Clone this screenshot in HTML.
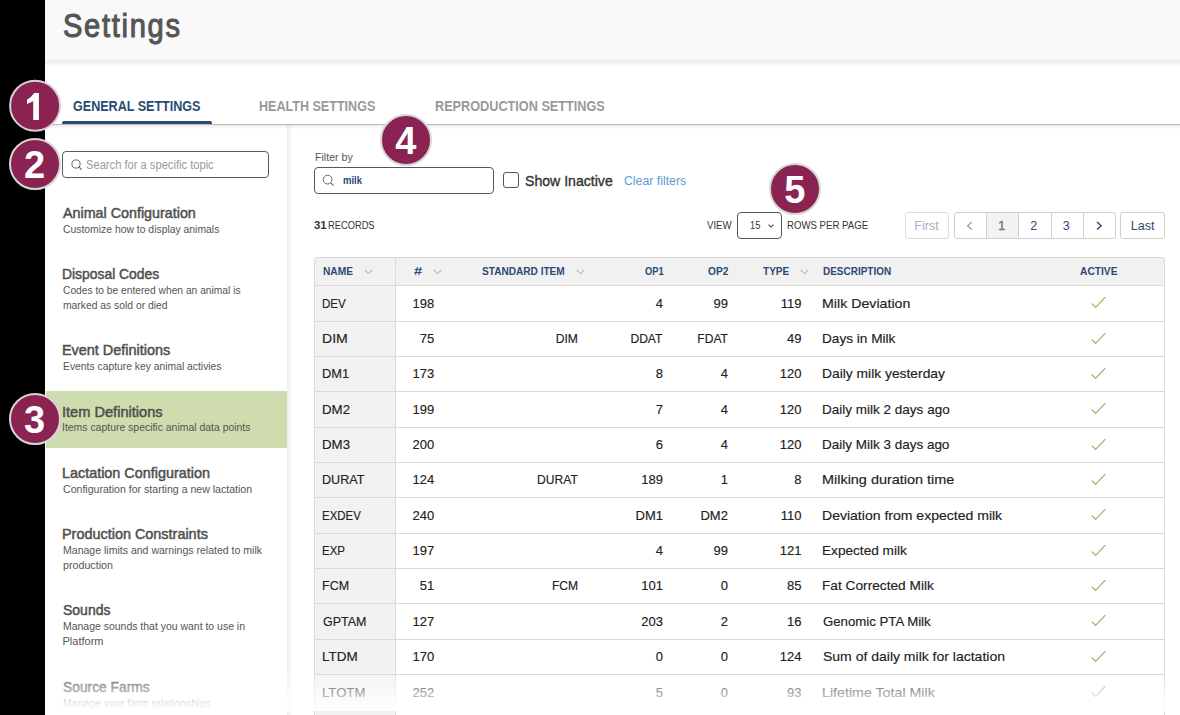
<!DOCTYPE html>
<html><head><meta charset="utf-8"><title>Settings</title>
<style>
html,body{margin:0;padding:0;}
body{width:1180px;height:715px;position:relative;overflow:hidden;background:#fff;font-family:"Liberation Sans",sans-serif;}
.t{position:absolute;white-space:nowrap;}
.badge{position:absolute;width:48px;height:48px;border-radius:50%;background:#8a2252;border:2px solid #d6d6d6;z-index:10;}
.badge span{position:absolute;left:0;right:0;top:0;text-align:center;color:#fff;font-weight:700;font-size:38px;line-height:50.6px;}
.box{position:absolute;box-sizing:border-box;}
</style></head><body>
<div class="box" style="left:0;top:0;width:45px;height:715px;background:#000"></div>
<div class="box" style="left:45px;top:0;width:1135px;height:60px;background:#f9f9f9"></div>
<div class="box" style="left:45px;top:60px;width:1135px;height:7px;background:linear-gradient(#ebebeb,rgba(255,255,255,0))"></div>
<!-- tab line -->
<div class="box" style="left:45px;top:124px;width:1135px;height:1px;background:#b9b9b9"></div>
<div class="box" style="left:45px;top:125px;width:1135px;height:4px;background:linear-gradient(rgba(0,0,0,0.08),rgba(0,0,0,0))"></div>
<div class="box" style="left:62px;top:121px;width:150px;height:3.2px;background:#2a4a74;border-radius:2px 2px 0 0"></div>
<!-- sidebar right shadow -->
<div class="box" style="left:287px;top:125px;width:6px;height:590px;background:linear-gradient(90deg,rgba(0,0,0,0.07),rgba(0,0,0,0))"></div>
<!-- sidebar search -->
<div class="box" style="left:62px;top:151px;width:207px;height:27px;border:1px solid #5a5a5a;border-radius:4px"></div>
<svg style="position:absolute;left:71px;top:159px" width="12" height="12" viewBox="0 0 12 12"><circle cx="5" cy="5" r="4.1" fill="none" stroke="#666" stroke-width="1"/><path d="M8 8 L10.6 10.6" stroke="#666" stroke-width="1.1"/></svg>
<!-- green highlight -->
<div class="box" style="left:46px;top:391px;width:241px;height:57px;background:#cfdcad"></div>
<!-- filter input -->
<div class="box" style="left:314px;top:167px;width:180px;height:27px;border:1px solid #4d5966;border-radius:4px"></div>
<svg style="position:absolute;left:322px;top:174px" width="13" height="13" viewBox="0 0 13 13"><circle cx="5.6" cy="5.6" r="4.4" fill="none" stroke="#666" stroke-width="1"/><path d="M8.8 8.8 L11.6 11.6" stroke="#666" stroke-width="1.1"/></svg>
<div class="box" style="left:503px;top:172px;width:16px;height:16px;border:1.3px solid #555;border-radius:3px"></div>
<!-- select -->
<div class="box" style="left:737px;top:212px;width:45px;height:27px;border:1px solid #555;border-radius:4px"></div>
<svg style="position:absolute;left:768.3px;top:223.8px" width="6" height="4" viewBox="0 0 9 6" preserveAspectRatio="none"><path d="M0.8 1 L4.5 4.6 L8.2 1" fill="none" stroke="#444" stroke-width="1.6"/></svg>
<!-- pagination -->
<div class="box" style="left:904.5px;top:212px;width:44px;height:27px;border:1px solid #dcdcdc;border-radius:3px"></div>
<div class="box" style="left:954.3px;top:212px;width:161.5px;height:27px;border:1px solid #cfcfcf;border-radius:3px;overflow:hidden">
 <div class="box" style="left:31px;top:0;width:32px;height:25px;background:#f2f2f2;border-left:1px solid #cfcfcf"></div>
 <div class="box" style="left:62.5px;top:0;width:1px;height:25px;background:#cfcfcf"></div>
 <div class="box" style="left:95.5px;top:0;width:1px;height:25px;background:#cfcfcf"></div>
 <div class="box" style="left:127.8px;top:0;width:1px;height:25px;background:#cfcfcf"></div>
</div>
<div class="box" style="left:1120.4px;top:212px;width:44.5px;height:27px;border:1px solid #cfcfcf;border-radius:3px"></div>
<svg style="position:absolute;left:965px;top:220px" width="10" height="12" viewBox="0 0 10 12"><path d="M6.8 2 L2.6 5.8 L6.8 9.6" fill="none" stroke="#8ea2b8" stroke-width="1.3"/></svg>
<svg style="position:absolute;left:1094px;top:220px" width="10" height="12" viewBox="0 0 10 12"><path d="M3 2 L7.2 5.8 L3 9.6" fill="none" stroke="#2a4a74" stroke-width="1.4"/></svg>
<!-- table -->
<div class="box" style="left:314px;top:257px;width:851px;height:460px;border:1px solid #d9d9d9;border-radius:3px 3px 0 0;background:#fff"></div>
<div class="box" style="left:315px;top:258px;width:849px;height:27px;background:#f1f1f1;border-radius:2px 2px 0 0"></div>
<div class="box" style="left:315px;top:285px;width:80px;height:440px;background:#f2f2f2"></div>
<div class="box" style="left:395.4px;top:258px;width:1px;height:460px;background:#dcdcdc"></div>
<div style="position:absolute;left:314px;width:851px;top:285px;height:1px;background:#d9d9d9"></div><div style="position:absolute;left:314px;width:851px;top:321px;height:1px;background:#d9d9d9"></div><div style="position:absolute;left:314px;width:851px;top:356px;height:1px;background:#d9d9d9"></div><div style="position:absolute;left:314px;width:851px;top:391px;height:1px;background:#d9d9d9"></div><div style="position:absolute;left:314px;width:851px;top:427px;height:1px;background:#d9d9d9"></div><div style="position:absolute;left:314px;width:851px;top:462px;height:1px;background:#d9d9d9"></div><div style="position:absolute;left:314px;width:851px;top:497px;height:1px;background:#d9d9d9"></div><div style="position:absolute;left:314px;width:851px;top:533px;height:1px;background:#d9d9d9"></div><div style="position:absolute;left:314px;width:851px;top:568px;height:1px;background:#d9d9d9"></div><div style="position:absolute;left:314px;width:851px;top:603px;height:1px;background:#d9d9d9"></div><div style="position:absolute;left:314px;width:851px;top:639px;height:1px;background:#d9d9d9"></div><div style="position:absolute;left:314px;width:851px;top:674px;height:1px;background:#d9d9d9"></div><div style="position:absolute;left:314px;width:851px;top:710px;height:1px;background:#d9d9d9"></div>
<svg style="position:absolute;left:364px;top:268.5px" width="9" height="6" viewBox="0 0 9 6" preserveAspectRatio="none"><path d="M0.8 1 L4.5 4.6 L8.2 1" fill="none" stroke="#a9bbcf" stroke-width="1.1"/></svg><svg style="position:absolute;left:433.2px;top:268.5px" width="9" height="6" viewBox="0 0 9 6" preserveAspectRatio="none"><path d="M0.8 1 L4.5 4.6 L8.2 1" fill="none" stroke="#a9bbcf" stroke-width="1.1"/></svg><svg style="position:absolute;left:576.2px;top:268.5px" width="9" height="6" viewBox="0 0 9 6" preserveAspectRatio="none"><path d="M0.8 1 L4.5 4.6 L8.2 1" fill="none" stroke="#a9bbcf" stroke-width="1.1"/></svg><svg style="position:absolute;left:799.5px;top:268.5px" width="9" height="6" viewBox="0 0 9 6" preserveAspectRatio="none"><path d="M0.8 1 L4.5 4.6 L8.2 1" fill="none" stroke="#a9bbcf" stroke-width="1.1"/></svg>
<svg style="position:absolute;left:1088px;top:295.50px" width="20" height="16" viewBox="0 0 20 16"><path d="M3.7 7.6 L7.6 11.3 L17.3 1.2" fill="none" stroke="#93b862" stroke-width="1.2"/></svg><svg style="position:absolute;left:1088px;top:331.50px" width="20" height="16" viewBox="0 0 20 16"><path d="M3.7 7.6 L7.6 11.3 L17.3 1.2" fill="none" stroke="#93b862" stroke-width="1.2"/></svg><svg style="position:absolute;left:1088px;top:366.50px" width="20" height="16" viewBox="0 0 20 16"><path d="M3.7 7.6 L7.6 11.3 L17.3 1.2" fill="none" stroke="#93b862" stroke-width="1.2"/></svg><svg style="position:absolute;left:1088px;top:401.50px" width="20" height="16" viewBox="0 0 20 16"><path d="M3.7 7.6 L7.6 11.3 L17.3 1.2" fill="none" stroke="#93b862" stroke-width="1.2"/></svg><svg style="position:absolute;left:1088px;top:437.50px" width="20" height="16" viewBox="0 0 20 16"><path d="M3.7 7.6 L7.6 11.3 L17.3 1.2" fill="none" stroke="#93b862" stroke-width="1.2"/></svg><svg style="position:absolute;left:1088px;top:472.50px" width="20" height="16" viewBox="0 0 20 16"><path d="M3.7 7.6 L7.6 11.3 L17.3 1.2" fill="none" stroke="#93b862" stroke-width="1.2"/></svg><svg style="position:absolute;left:1088px;top:507.50px" width="20" height="16" viewBox="0 0 20 16"><path d="M3.7 7.6 L7.6 11.3 L17.3 1.2" fill="none" stroke="#93b862" stroke-width="1.2"/></svg><svg style="position:absolute;left:1088px;top:543.50px" width="20" height="16" viewBox="0 0 20 16"><path d="M3.7 7.6 L7.6 11.3 L17.3 1.2" fill="none" stroke="#93b862" stroke-width="1.2"/></svg><svg style="position:absolute;left:1088px;top:578.50px" width="20" height="16" viewBox="0 0 20 16"><path d="M3.7 7.6 L7.6 11.3 L17.3 1.2" fill="none" stroke="#93b862" stroke-width="1.2"/></svg><svg style="position:absolute;left:1088px;top:613.50px" width="20" height="16" viewBox="0 0 20 16"><path d="M3.7 7.6 L7.6 11.3 L17.3 1.2" fill="none" stroke="#93b862" stroke-width="1.2"/></svg><svg style="position:absolute;left:1088px;top:649.50px" width="20" height="16" viewBox="0 0 20 16"><path d="M3.7 7.6 L7.6 11.3 L17.3 1.2" fill="none" stroke="#93b862" stroke-width="1.2"/></svg><svg style="position:absolute;left:1088px;top:684.50px" width="20" height="16" viewBox="0 0 20 16"><path d="M3.7 7.6 L7.6 11.3 L17.3 1.2" fill="none" stroke="#93b862" stroke-width="1.2"/></svg>
<div class="t" style="top:3.57px;font-size:34px;line-height:42.5px;font-weight:400;color:#555555;left:62.84px;transform:scaleX(0.8550);transform-origin:left center;letter-spacing:2px;-webkit-text-stroke:1.1px #555555;">Settings</div>
<div class="t" style="top:96.92px;font-size:14.5px;line-height:18.12px;font-weight:700;color:#2a4a74;left:73.40px;transform:scaleX(0.8663);transform-origin:left center;">GENERAL SETTINGS</div>
<div class="t" style="top:96.92px;font-size:14.5px;line-height:18.12px;font-weight:700;color:#9a9a9a;left:259.30px;transform:scaleX(0.8663);transform-origin:left center;">HEALTH SETTINGS</div>
<div class="t" style="top:96.92px;font-size:14.5px;line-height:18.12px;font-weight:700;color:#9a9a9a;left:434.50px;transform:scaleX(0.8746);transform-origin:left center;">REPRODUCTION SETTINGS</div>
<div class="t" style="top:157.74px;font-size:12px;line-height:15.0px;font-weight:400;color:#9b9b9b;left:86.20px;transform:scaleX(0.9294);transform-origin:left center;">Search for a specific topic</div>
<div class="t" style="top:204.03px;font-size:15px;line-height:18.75px;font-weight:400;color:#4f4f4f;left:62.50px;transform:scaleX(0.9539);transform-origin:left center;-webkit-text-stroke:0.5px #4f4f4f;">Animal Configuration</div>
<div class="t" style="top:223.41px;font-size:11px;line-height:13.75px;font-weight:400;color:#555555;left:62.50px;transform:scaleX(0.9435);transform-origin:left center;">Customize how to display animals</div>
<div class="t" style="top:265.03px;font-size:15px;line-height:18.75px;font-weight:400;color:#4f4f4f;left:61.57px;transform:scaleX(0.9251);transform-origin:left center;-webkit-text-stroke:0.5px #4f4f4f;">Disposal Codes</div>
<div class="t" style="top:284.41px;font-size:11px;line-height:13.75px;font-weight:400;color:#555555;left:62.50px;transform:scaleX(0.9305);transform-origin:left center;">Codes to be entered when an animal is</div>
<div class="t" style="top:299.41px;font-size:11px;line-height:13.75px;font-weight:400;color:#555555;left:62.50px;transform:scaleX(0.9392);transform-origin:left center;">marked as sold or died</div>
<div class="t" style="top:341.03px;font-size:15px;line-height:18.75px;font-weight:400;color:#4f4f4f;left:61.54px;transform:scaleX(0.9608);transform-origin:left center;-webkit-text-stroke:0.5px #4f4f4f;">Event Definitions</div>
<div class="t" style="top:360.41px;font-size:11px;line-height:13.75px;font-weight:400;color:#555555;left:62.50px;transform:scaleX(0.9395);transform-origin:left center;">Events capture key animal activies</div>
<div class="t" style="top:403.03px;font-size:15px;line-height:18.75px;font-weight:400;color:#4f4f4f;left:61.53px;transform:scaleX(0.9728);transform-origin:left center;-webkit-text-stroke:0.5px #4f4f4f;">Item Definitions</div>
<div class="t" style="top:421.31px;font-size:11px;line-height:13.75px;font-weight:400;color:#555555;left:61.55px;transform:scaleX(0.9485);transform-origin:left center;">Items capture specific animal data points</div>
<div class="t" style="top:464.03px;font-size:15px;line-height:18.75px;font-weight:400;color:#4f4f4f;left:61.54px;transform:scaleX(0.9586);transform-origin:left center;-webkit-text-stroke:0.5px #4f4f4f;">Lactation Configuration</div>
<div class="t" style="top:483.41px;font-size:11px;line-height:13.75px;font-weight:400;color:#555555;left:62.50px;transform:scaleX(0.9605);transform-origin:left center;">Configuration for starting a new lactation</div>
<div class="t" style="top:524.83px;font-size:15px;line-height:18.75px;font-weight:400;color:#4f4f4f;left:61.54px;transform:scaleX(0.9611);transform-origin:left center;-webkit-text-stroke:0.5px #4f4f4f;">Production Constraints</div>
<div class="t" style="top:544.21px;font-size:11px;line-height:13.75px;font-weight:400;color:#555555;left:62.50px;transform:scaleX(0.9574);transform-origin:left center;">Manage limits and warnings related to milk</div>
<div class="t" style="top:559.21px;font-size:11px;line-height:13.75px;font-weight:400;color:#555555;left:62.50px;transform:scaleX(0.9717);transform-origin:left center;">production</div>
<div class="t" style="top:600.93px;font-size:15px;line-height:18.75px;font-weight:400;color:#4f4f4f;left:62.50px;transform:scaleX(0.9330);transform-origin:left center;-webkit-text-stroke:0.5px #4f4f4f;">Sounds</div>
<div class="t" style="top:620.31px;font-size:11px;line-height:13.75px;font-weight:400;color:#555555;left:62.50px;transform:scaleX(0.9509);transform-origin:left center;">Manage sounds that you want to use in</div>
<div class="t" style="top:635.31px;font-size:11px;line-height:13.75px;font-weight:400;color:#555555;left:62.50px;">Platform</div>
<div class="t" style="top:677.83px;font-size:15px;line-height:18.75px;font-weight:400;color:#4f4f4f;left:62.50px;transform:scaleX(0.9201);transform-origin:left center;-webkit-text-stroke:0.5px #4f4f4f;">Source Farms</div>
<div class="t" style="top:697.21px;font-size:11px;line-height:13.75px;font-weight:400;color:#555555;left:62.50px;transform:scaleX(0.9594);transform-origin:left center;">Manage your farm relationships</div>
<div class="t" style="top:151.11px;font-size:11px;line-height:13.75px;font-weight:400;color:#555555;left:314.50px;transform:scaleX(0.9642);transform-origin:left center;">Filter by</div>
<div class="t" style="top:172.63px;font-size:11.5px;line-height:14.38px;font-weight:700;color:#2a4a74;left:342.50px;transform:scaleX(0.8257);transform-origin:left center;">milk</div>
<div class="t" style="top:171.62px;font-size:14.5px;line-height:18.12px;font-weight:400;color:#333333;left:525.40px;transform:scaleX(0.9722);transform-origin:left center;-webkit-text-stroke:0.35px #333;">Show Inactive</div>
<div class="t" style="top:173.07px;font-size:13px;line-height:16.25px;font-weight:400;color:#5b9bd8;left:624.40px;transform:scaleX(0.9451);transform-origin:left center;">Clear filters</div>
<div class="t" style="top:218.71px;font-size:11px;line-height:13.75px;font-weight:700;color:#333333;left:314.20px;transform:scaleX(1.0316);transform-origin:left center;">31</div>
<div class="t" style="top:218.71px;font-size:11px;line-height:13.75px;font-weight:400;color:#333333;left:327.50px;transform:scaleX(0.8469);transform-origin:left center;">RECORDS</div>
<div class="t" style="top:218.81px;font-size:11px;line-height:13.75px;font-weight:400;color:#333333;left:706.80px;transform:scaleX(0.8737);transform-origin:left center;">VIEW</div>
<div class="t" style="top:219.11px;font-size:11px;line-height:13.75px;font-weight:400;color:#333333;left:750.00px;transform:scaleX(0.8417);transform-origin:left center;">15</div>
<div class="t" style="top:218.81px;font-size:11px;line-height:13.75px;font-weight:400;color:#333333;left:787.00px;transform:scaleX(0.8748);transform-origin:left center;">ROWS PER PAGE</div>
<div class="t" style="top:219.36px;font-size:12.5px;line-height:15.62px;font-weight:400;color:#9fb0c4;left:914.35px;width:24.30px;text-align:center;">First</div>
<div class="t" style="top:219.36px;font-size:12.5px;line-height:15.62px;font-weight:400;color:#777777;left:998.22px;width:6.95px;text-align:center;-webkit-text-stroke:0.4px #777;">1</div>
<div class="t" style="top:219.36px;font-size:12.5px;line-height:15.62px;font-weight:400;color:#2a4a74;left:1030.32px;width:6.95px;text-align:center;">2</div>
<div class="t" style="top:219.36px;font-size:12.5px;line-height:15.62px;font-weight:400;color:#2a4a74;left:1062.82px;width:6.95px;text-align:center;">3</div>
<div class="t" style="top:219.36px;font-size:12.5px;line-height:15.62px;font-weight:400;color:#2a4a74;left:1130.79px;width:23.63px;text-align:center;">Last</div>
<div class="t" style="top:264.81px;font-size:11px;line-height:13.75px;font-weight:700;color:#2a4a74;left:323.00px;transform:scaleX(0.9267);transform-origin:left center;">NAME</div>
<div class="t" style="top:264.81px;font-size:11px;line-height:13.75px;font-weight:700;color:#2a4a74;left:413.80px;transform:scaleX(1.3167);transform-origin:left center;">#</div>
<div class="t" style="top:264.81px;font-size:11px;line-height:13.75px;font-weight:700;color:#2a4a74;left:482.30px;transform:scaleX(0.9171);transform-origin:left center;">STANDARD ITEM</div>
<div class="t" style="top:264.81px;font-size:11px;line-height:13.75px;font-weight:700;color:#2a4a74;left:644.90px;transform:scaleX(0.8450);transform-origin:left center;">OP1</div>
<div class="t" style="top:264.81px;font-size:11px;line-height:13.75px;font-weight:700;color:#2a4a74;left:707.80px;transform:scaleX(0.9227);transform-origin:left center;">OP2</div>
<div class="t" style="top:264.81px;font-size:11px;line-height:13.75px;font-weight:700;color:#2a4a74;left:762.60px;transform:scaleX(0.9122);transform-origin:left center;">TYPE</div>
<div class="t" style="top:264.81px;font-size:11px;line-height:13.75px;font-weight:700;color:#2a4a74;left:823.00px;transform:scaleX(0.9066);transform-origin:left center;">DESCRIPTION</div>
<div class="t" style="top:264.81px;font-size:11px;line-height:13.75px;font-weight:700;color:#2a4a74;left:1080.00px;transform:scaleX(0.9300);transform-origin:left center;">ACTIVE</div>
<div class="t" style="top:295.67px;font-size:13px;line-height:16.25px;font-weight:400;color:#222222;left:322.11px;transform:scaleX(0.8903);transform-origin:left center;-webkit-text-stroke:0.15px #222;">DEV</div>
<div class="t" style="top:295.67px;font-size:13px;line-height:16.25px;font-weight:400;color:#222222;left:412.54px;width:21.69px;text-align:right;-webkit-text-stroke:0.15px #222;">198</div>
<div class="t" style="top:295.67px;font-size:13px;line-height:16.25px;font-weight:400;color:#222222;left:655.80px;width:7.23px;text-align:right;-webkit-text-stroke:0.15px #222;">4</div>
<div class="t" style="top:295.67px;font-size:13px;line-height:16.25px;font-weight:400;color:#222222;left:713.47px;width:14.46px;text-align:right;-webkit-text-stroke:0.15px #222;">99</div>
<div class="t" style="top:295.67px;font-size:13px;line-height:16.25px;font-weight:400;color:#222222;left:780.70px;width:20.73px;text-align:right;-webkit-text-stroke:0.15px #222;">119</div>
<div class="t" style="top:295.67px;font-size:13px;line-height:16.25px;font-weight:400;color:#222222;left:822.21px;transform:scaleX(1.0918);transform-origin:left center;-webkit-text-stroke:0.15px #222;">Milk Deviation</div>
<div class="t" style="top:331.17px;font-size:13px;line-height:16.25px;font-weight:400;color:#222222;left:321.92px;transform:scaleX(1.0818);transform-origin:left center;-webkit-text-stroke:0.15px #222;">DIM</div>
<div class="t" style="top:331.17px;font-size:13px;line-height:16.25px;font-weight:400;color:#222222;left:419.77px;width:14.46px;text-align:right;-webkit-text-stroke:0.15px #222;">75</div>
<div class="t" style="top:331.17px;font-size:13px;line-height:16.25px;font-weight:400;color:#222222;left:554.34px;width:23.83px;text-align:right;transform:scaleX(0.9300);transform-origin:right center;-webkit-text-stroke:0.15px #222;">DIM</div>
<div class="t" style="top:331.17px;font-size:13px;line-height:16.25px;font-weight:400;color:#222222;left:628.32px;width:34.42px;text-align:right;transform:scaleX(0.9300);transform-origin:right center;-webkit-text-stroke:0.15px #222;">DDAT</div>
<div class="t" style="top:331.17px;font-size:13px;line-height:16.25px;font-weight:400;color:#222222;left:694.67px;width:32.98px;text-align:right;transform:scaleX(0.9300);transform-origin:right center;-webkit-text-stroke:0.15px #222;">FDAT</div>
<div class="t" style="top:331.17px;font-size:13px;line-height:16.25px;font-weight:400;color:#222222;left:786.97px;width:14.46px;text-align:right;-webkit-text-stroke:0.15px #222;">49</div>
<div class="t" style="top:331.17px;font-size:13px;line-height:16.25px;font-weight:400;color:#222222;left:822.25px;transform:scaleX(1.0479);transform-origin:left center;-webkit-text-stroke:0.15px #222;">Days in Milk</div>
<div class="t" style="top:366.17px;font-size:13px;line-height:16.25px;font-weight:400;color:#222222;left:322.01px;transform:scaleX(0.9879);transform-origin:left center;-webkit-text-stroke:0.15px #222;">DM1</div>
<div class="t" style="top:366.17px;font-size:13px;line-height:16.25px;font-weight:400;color:#222222;left:412.54px;width:21.69px;text-align:right;-webkit-text-stroke:0.15px #222;">173</div>
<div class="t" style="top:366.17px;font-size:13px;line-height:16.25px;font-weight:400;color:#222222;left:655.80px;width:7.23px;text-align:right;-webkit-text-stroke:0.15px #222;">8</div>
<div class="t" style="top:366.17px;font-size:13px;line-height:16.25px;font-weight:400;color:#222222;left:720.70px;width:7.23px;text-align:right;-webkit-text-stroke:0.15px #222;">4</div>
<div class="t" style="top:366.17px;font-size:13px;line-height:16.25px;font-weight:400;color:#222222;left:779.74px;width:21.69px;text-align:right;-webkit-text-stroke:0.15px #222;">120</div>
<div class="t" style="top:366.17px;font-size:13px;line-height:16.25px;font-weight:400;color:#222222;left:822.24px;transform:scaleX(1.0636);transform-origin:left center;-webkit-text-stroke:0.15px #222;">Daily milk yesterday</div>
<div class="t" style="top:401.67px;font-size:13px;line-height:16.25px;font-weight:400;color:#222222;left:321.98px;transform:scaleX(1.0222);transform-origin:left center;-webkit-text-stroke:0.15px #222;">DM2</div>
<div class="t" style="top:401.67px;font-size:13px;line-height:16.25px;font-weight:400;color:#222222;left:412.54px;width:21.69px;text-align:right;-webkit-text-stroke:0.15px #222;">199</div>
<div class="t" style="top:401.67px;font-size:13px;line-height:16.25px;font-weight:400;color:#222222;left:655.80px;width:7.23px;text-align:right;-webkit-text-stroke:0.15px #222;">7</div>
<div class="t" style="top:401.67px;font-size:13px;line-height:16.25px;font-weight:400;color:#222222;left:720.70px;width:7.23px;text-align:right;-webkit-text-stroke:0.15px #222;">4</div>
<div class="t" style="top:401.67px;font-size:13px;line-height:16.25px;font-weight:400;color:#222222;left:779.74px;width:21.69px;text-align:right;-webkit-text-stroke:0.15px #222;">120</div>
<div class="t" style="top:401.67px;font-size:13px;line-height:16.25px;font-weight:400;color:#222222;left:822.26px;transform:scaleX(1.0395);transform-origin:left center;-webkit-text-stroke:0.15px #222;">Daily milk 2 days ago</div>
<div class="t" style="top:437.17px;font-size:13px;line-height:16.25px;font-weight:400;color:#222222;left:321.98px;transform:scaleX(1.0222);transform-origin:left center;-webkit-text-stroke:0.15px #222;">DM3</div>
<div class="t" style="top:437.17px;font-size:13px;line-height:16.25px;font-weight:400;color:#222222;left:412.54px;width:21.69px;text-align:right;-webkit-text-stroke:0.15px #222;">200</div>
<div class="t" style="top:437.17px;font-size:13px;line-height:16.25px;font-weight:400;color:#222222;left:655.80px;width:7.23px;text-align:right;-webkit-text-stroke:0.15px #222;">6</div>
<div class="t" style="top:437.17px;font-size:13px;line-height:16.25px;font-weight:400;color:#222222;left:720.70px;width:7.23px;text-align:right;-webkit-text-stroke:0.15px #222;">4</div>
<div class="t" style="top:437.17px;font-size:13px;line-height:16.25px;font-weight:400;color:#222222;left:779.74px;width:21.69px;text-align:right;-webkit-text-stroke:0.15px #222;">120</div>
<div class="t" style="top:437.17px;font-size:13px;line-height:16.25px;font-weight:400;color:#222222;left:822.26px;transform:scaleX(1.0370);transform-origin:left center;-webkit-text-stroke:0.15px #222;">Daily Milk 3 days ago</div>
<div class="t" style="top:472.17px;font-size:13px;line-height:16.25px;font-weight:400;color:#222222;left:322.03px;transform:scaleX(0.9680);transform-origin:left center;-webkit-text-stroke:0.15px #222;">DURAT</div>
<div class="t" style="top:472.17px;font-size:13px;line-height:16.25px;font-weight:400;color:#222222;left:412.54px;width:21.69px;text-align:right;-webkit-text-stroke:0.15px #222;">124</div>
<div class="t" style="top:472.17px;font-size:13px;line-height:16.25px;font-weight:400;color:#222222;left:533.53px;width:43.81px;text-align:right;transform:scaleX(0.9300);transform-origin:right center;-webkit-text-stroke:0.15px #222;">DURAT</div>
<div class="t" style="top:472.17px;font-size:13px;line-height:16.25px;font-weight:400;color:#222222;left:641.34px;width:21.69px;text-align:right;-webkit-text-stroke:0.15px #222;">189</div>
<div class="t" style="top:472.17px;font-size:13px;line-height:16.25px;font-weight:400;color:#222222;left:720.70px;width:7.23px;text-align:right;-webkit-text-stroke:0.15px #222;">1</div>
<div class="t" style="top:472.17px;font-size:13px;line-height:16.25px;font-weight:400;color:#222222;left:794.20px;width:7.23px;text-align:right;-webkit-text-stroke:0.15px #222;">8</div>
<div class="t" style="top:472.17px;font-size:13px;line-height:16.25px;font-weight:400;color:#222222;left:822.19px;transform:scaleX(1.1095);transform-origin:left center;-webkit-text-stroke:0.15px #222;">Milking duration time</div>
<div class="t" style="top:507.67px;font-size:13px;line-height:16.25px;font-weight:400;color:#222222;left:322.12px;transform:scaleX(0.8802);transform-origin:left center;-webkit-text-stroke:0.15px #222;">EXDEV</div>
<div class="t" style="top:507.67px;font-size:13px;line-height:16.25px;font-weight:400;color:#222222;left:412.54px;width:21.69px;text-align:right;-webkit-text-stroke:0.15px #222;">240</div>
<div class="t" style="top:507.67px;font-size:13px;line-height:16.25px;font-weight:400;color:#222222;left:635.58px;width:27.45px;text-align:right;-webkit-text-stroke:0.15px #222;">DM1</div>
<div class="t" style="top:507.67px;font-size:13px;line-height:16.25px;font-weight:400;color:#222222;left:700.48px;width:27.45px;text-align:right;-webkit-text-stroke:0.15px #222;">DM2</div>
<div class="t" style="top:507.67px;font-size:13px;line-height:16.25px;font-weight:400;color:#222222;left:780.70px;width:20.73px;text-align:right;-webkit-text-stroke:0.15px #222;">110</div>
<div class="t" style="top:507.67px;font-size:13px;line-height:16.25px;font-weight:400;color:#222222;left:822.22px;transform:scaleX(1.0793);transform-origin:left center;-webkit-text-stroke:0.15px #222;">Deviation from expected milk</div>
<div class="t" style="top:543.17px;font-size:13px;line-height:16.25px;font-weight:400;color:#222222;left:322.12px;transform:scaleX(0.8833);transform-origin:left center;-webkit-text-stroke:0.15px #222;">EXP</div>
<div class="t" style="top:543.17px;font-size:13px;line-height:16.25px;font-weight:400;color:#222222;left:412.54px;width:21.69px;text-align:right;-webkit-text-stroke:0.15px #222;">197</div>
<div class="t" style="top:543.17px;font-size:13px;line-height:16.25px;font-weight:400;color:#222222;left:655.80px;width:7.23px;text-align:right;-webkit-text-stroke:0.15px #222;">4</div>
<div class="t" style="top:543.17px;font-size:13px;line-height:16.25px;font-weight:400;color:#222222;left:713.47px;width:14.46px;text-align:right;-webkit-text-stroke:0.15px #222;">99</div>
<div class="t" style="top:543.17px;font-size:13px;line-height:16.25px;font-weight:400;color:#222222;left:779.74px;width:21.69px;text-align:right;-webkit-text-stroke:0.15px #222;">121</div>
<div class="t" style="top:543.17px;font-size:13px;line-height:16.25px;font-weight:400;color:#222222;left:822.25px;transform:scaleX(1.0482);transform-origin:left center;-webkit-text-stroke:0.15px #222;">Expected milk</div>
<div class="t" style="top:578.17px;font-size:13px;line-height:16.25px;font-weight:400;color:#222222;left:322.04px;transform:scaleX(0.9609);transform-origin:left center;-webkit-text-stroke:0.15px #222;">FCM</div>
<div class="t" style="top:578.17px;font-size:13px;line-height:16.25px;font-weight:400;color:#222222;left:419.77px;width:14.46px;text-align:right;-webkit-text-stroke:0.15px #222;">51</div>
<div class="t" style="top:578.17px;font-size:13px;line-height:16.25px;font-weight:400;color:#222222;left:550.01px;width:28.16px;text-align:right;transform:scaleX(0.9300);transform-origin:right center;-webkit-text-stroke:0.15px #222;">FCM</div>
<div class="t" style="top:578.17px;font-size:13px;line-height:16.25px;font-weight:400;color:#222222;left:641.34px;width:21.69px;text-align:right;-webkit-text-stroke:0.15px #222;">101</div>
<div class="t" style="top:578.17px;font-size:13px;line-height:16.25px;font-weight:400;color:#222222;left:720.70px;width:7.23px;text-align:right;-webkit-text-stroke:0.15px #222;">0</div>
<div class="t" style="top:578.17px;font-size:13px;line-height:16.25px;font-weight:400;color:#222222;left:786.97px;width:14.46px;text-align:right;-webkit-text-stroke:0.15px #222;">85</div>
<div class="t" style="top:578.17px;font-size:13px;line-height:16.25px;font-weight:400;color:#222222;left:822.25px;transform:scaleX(1.0531);transform-origin:left center;-webkit-text-stroke:0.15px #222;">Fat Corrected Milk</div>
<div class="t" style="top:613.67px;font-size:13px;line-height:16.25px;font-weight:400;color:#222222;left:323.00px;transform:scaleX(0.9588);transform-origin:left center;-webkit-text-stroke:0.15px #222;">GPTAM</div>
<div class="t" style="top:613.67px;font-size:13px;line-height:16.25px;font-weight:400;color:#222222;left:412.54px;width:21.69px;text-align:right;-webkit-text-stroke:0.15px #222;">127</div>
<div class="t" style="top:613.67px;font-size:13px;line-height:16.25px;font-weight:400;color:#222222;left:641.34px;width:21.69px;text-align:right;-webkit-text-stroke:0.15px #222;">203</div>
<div class="t" style="top:613.67px;font-size:13px;line-height:16.25px;font-weight:400;color:#222222;left:720.70px;width:7.23px;text-align:right;-webkit-text-stroke:0.15px #222;">2</div>
<div class="t" style="top:613.67px;font-size:13px;line-height:16.25px;font-weight:400;color:#222222;left:786.97px;width:14.46px;text-align:right;-webkit-text-stroke:0.15px #222;">16</div>
<div class="t" style="top:613.67px;font-size:13px;line-height:16.25px;font-weight:400;color:#222222;left:823.30px;transform:scaleX(1.0162);transform-origin:left center;-webkit-text-stroke:0.15px #222;">Genomic PTA Milk</div>
<div class="t" style="top:649.17px;font-size:13px;line-height:16.25px;font-weight:400;color:#222222;left:321.96px;transform:scaleX(1.0370);transform-origin:left center;-webkit-text-stroke:0.15px #222;">LTDM</div>
<div class="t" style="top:649.17px;font-size:13px;line-height:16.25px;font-weight:400;color:#222222;left:412.54px;width:21.69px;text-align:right;-webkit-text-stroke:0.15px #222;">170</div>
<div class="t" style="top:649.17px;font-size:13px;line-height:16.25px;font-weight:400;color:#222222;left:655.80px;width:7.23px;text-align:right;-webkit-text-stroke:0.15px #222;">0</div>
<div class="t" style="top:649.17px;font-size:13px;line-height:16.25px;font-weight:400;color:#222222;left:720.70px;width:7.23px;text-align:right;-webkit-text-stroke:0.15px #222;">0</div>
<div class="t" style="top:649.17px;font-size:13px;line-height:16.25px;font-weight:400;color:#222222;left:779.74px;width:21.69px;text-align:right;-webkit-text-stroke:0.15px #222;">124</div>
<div class="t" style="top:649.17px;font-size:13px;line-height:16.25px;font-weight:400;color:#222222;left:823.30px;transform:scaleX(1.0762);transform-origin:left center;-webkit-text-stroke:0.15px #222;">Sum of daily milk for lactation</div>
<div class="t" style="top:684.67px;font-size:13px;line-height:16.25px;font-weight:400;color:#222222;left:321.99px;transform:scaleX(1.0116);transform-origin:left center;-webkit-text-stroke:0.15px #222;">LTOTM</div>
<div class="t" style="top:684.67px;font-size:13px;line-height:16.25px;font-weight:400;color:#222222;left:412.54px;width:21.69px;text-align:right;-webkit-text-stroke:0.15px #222;">252</div>
<div class="t" style="top:684.67px;font-size:13px;line-height:16.25px;font-weight:400;color:#222222;left:655.80px;width:7.23px;text-align:right;-webkit-text-stroke:0.15px #222;">5</div>
<div class="t" style="top:684.67px;font-size:13px;line-height:16.25px;font-weight:400;color:#222222;left:720.70px;width:7.23px;text-align:right;-webkit-text-stroke:0.15px #222;">0</div>
<div class="t" style="top:684.67px;font-size:13px;line-height:16.25px;font-weight:400;color:#222222;left:786.97px;width:14.46px;text-align:right;-webkit-text-stroke:0.15px #222;">93</div>
<div class="t" style="top:684.67px;font-size:13px;line-height:16.25px;font-weight:400;color:#222222;left:822.21px;transform:scaleX(1.0943);transform-origin:left center;-webkit-text-stroke:0.15px #222;">Lifetime Total Milk</div>
<!-- fade -->
<div class="box" style="left:45px;top:675px;width:1135px;height:35.5px;background:linear-gradient(rgba(255,255,255,0.2),rgba(255,255,255,1));z-index:5"></div>
<svg style="position:absolute;left:0;top:0;z-index:10" width="1180" height="715" viewBox="0 0 1180 715"><circle cx="35.1" cy="105.7" r="25" fill="#8a2252" stroke="#d4d4d4" stroke-width="2"/><path transform="translate(0.00,0.00)" d="M34.2 93 L38.9 93 L38.9 120 L33.2 120 L33.2 101.3 L27 104 L27 99.8 Q31.2 97.6 34.2 93 Z" fill="#fff"/></svg><div class="badge" style="left:8.6px;top:138.3px"><span>2</span></div><div class="badge" style="left:8.6px;top:393.0px"><span>3</span></div><div class="badge" style="left:379.9px;top:114.0px"><span>4</span></div><div class="badge" style="left:768.8px;top:162.8px"><span>5</span></div>
</body></html>
